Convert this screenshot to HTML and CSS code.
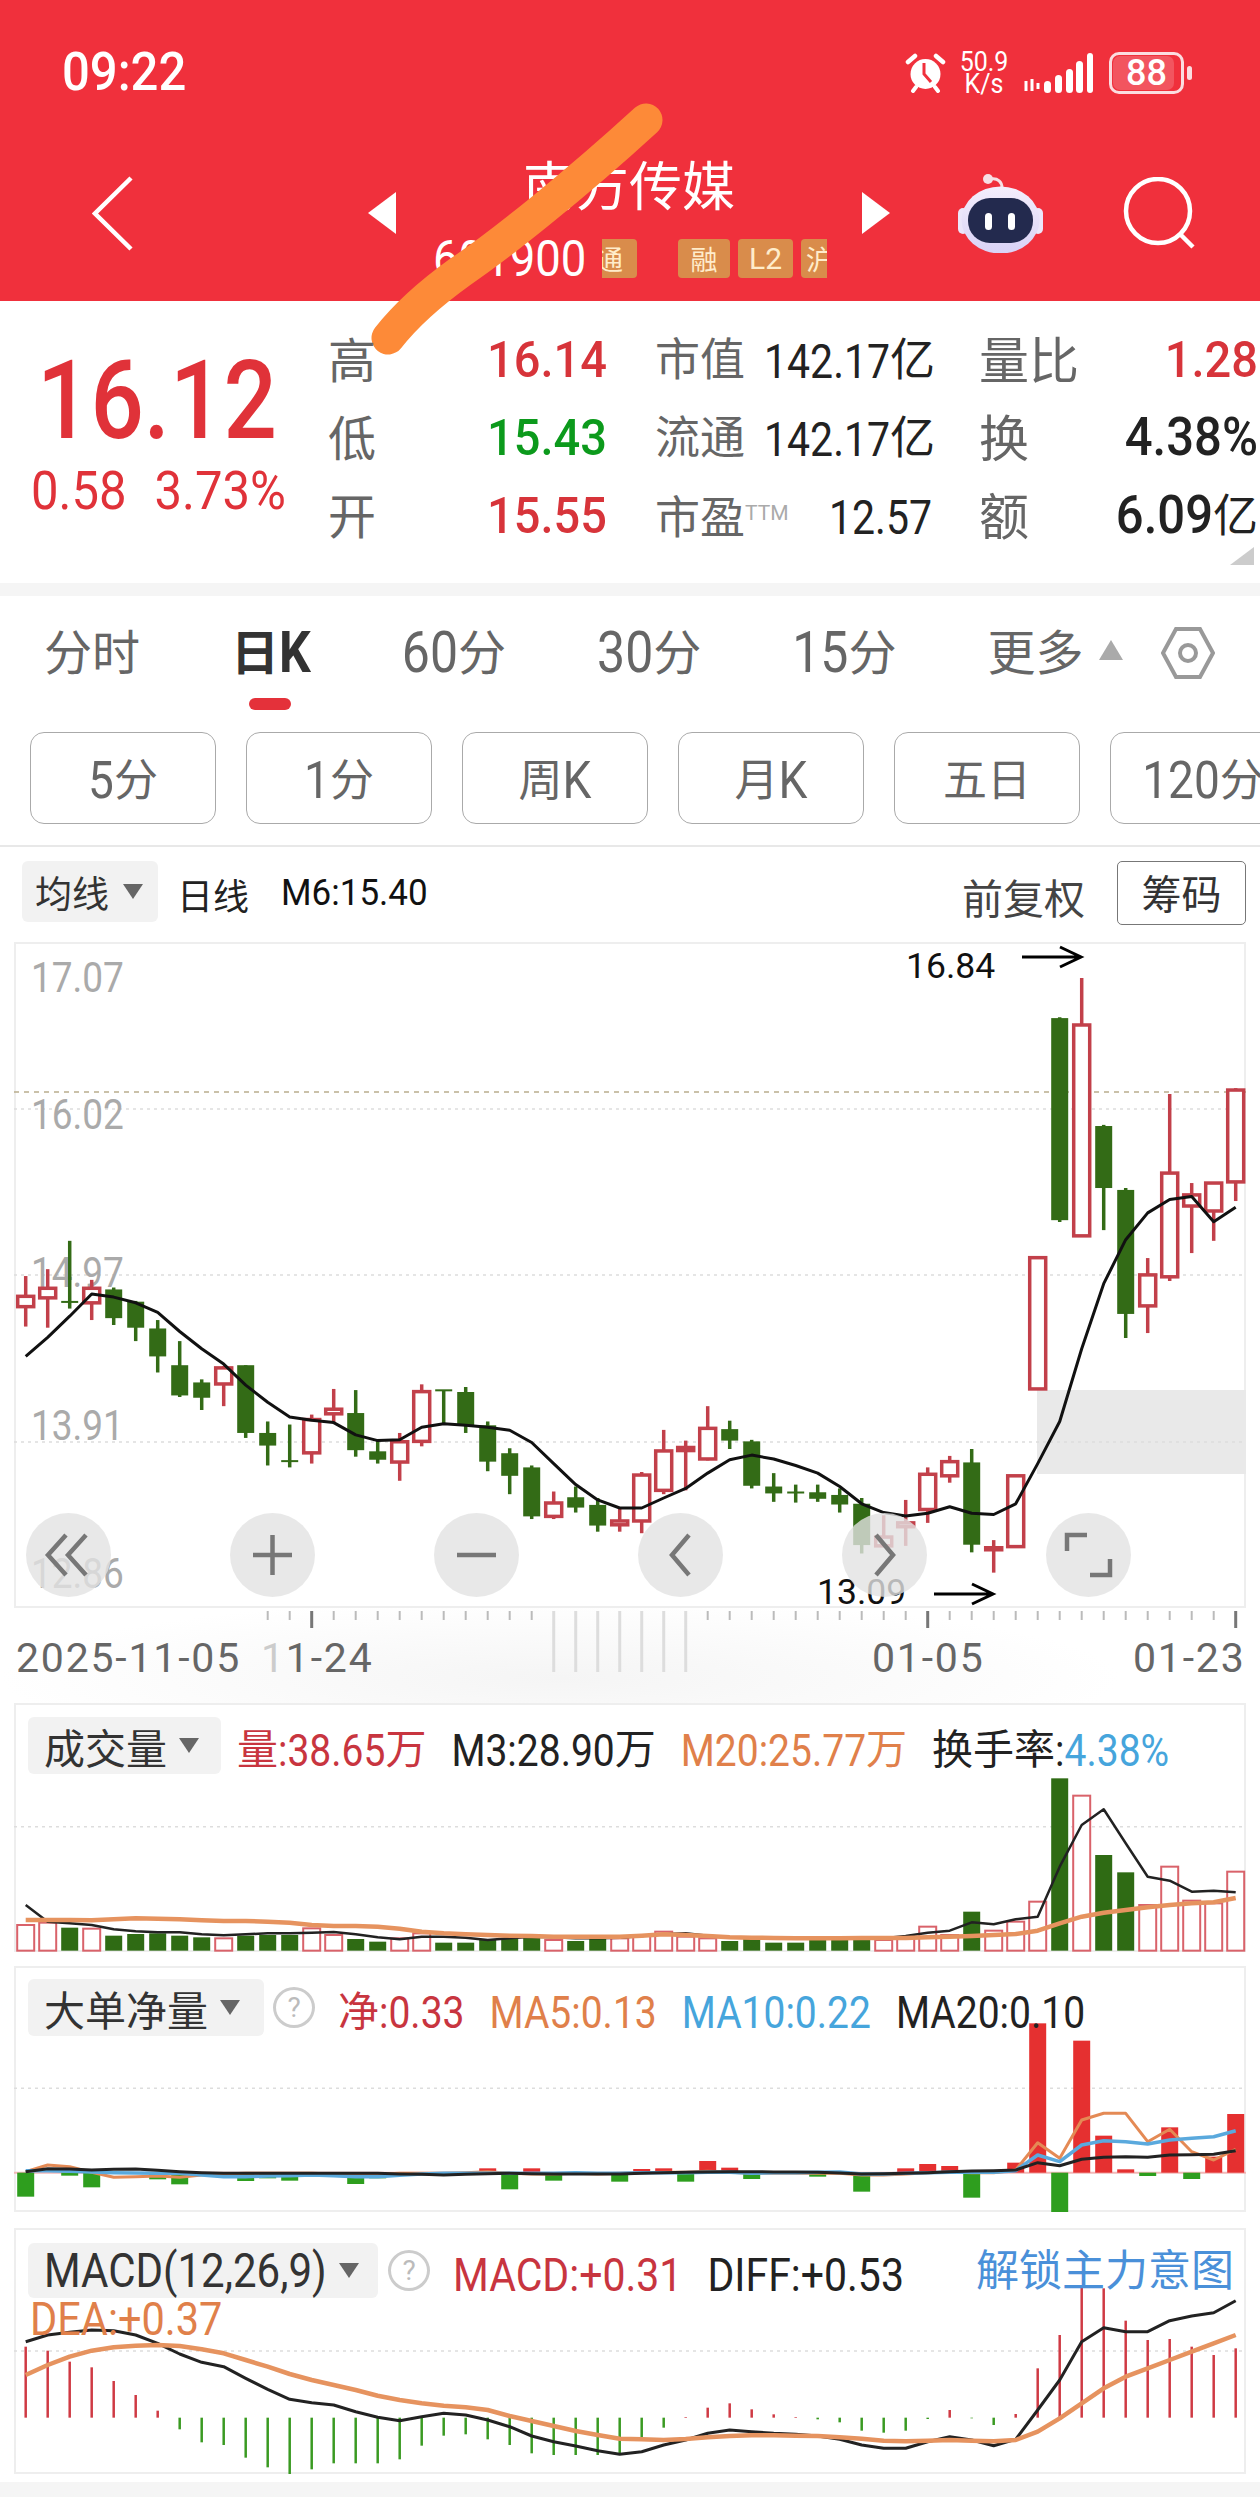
FILE: index.html
```html
<!DOCTYPE html>
<html lang="zh-CN">
<head>
  <meta charset="UTF-8">
  <meta name="viewport" content="width=device-width, initial-scale=1.0">
  <title>南方传媒</title>
  <link rel="stylesheet" href="styles.css">
</head>
<body>
<div class="page">

  <!-- red top bar -->
  <header class="topbar">
    <div class="status">
      <span class="n time">09:22</span>
      <div class="status-right">
        <svg class="alarm" viewBox="0 0 41 40">
          <circle cx="20.5" cy="21" r="15" fill="#fff"/>
          <path d="M3 9 L10 3 M38 9 L31 3" stroke="#fff" stroke-width="4.5" stroke-linecap="round"/>
          <path d="M8 38 L11 34 M33 38 L30 34" stroke="#fff" stroke-width="4" stroke-linecap="round"/>
          <path d="M19 10 V21 L26 29" stroke="#F0303C" stroke-width="3" fill="none"/>
        </svg>
        <div class="speed"><span class="n">50.9</span><span class="n">K/s</span></div>
        <svg class="signal" viewBox="0 0 70 40">
          <path d="M3 28 V38 M9 26 V38 M15 30 V36" stroke="#fff" stroke-width="3" fill="none"/>
          <rect x="21" y="28" width="7" height="12" rx="3.5" fill="#fff"/>
          <rect x="32" y="22" width="7" height="18" rx="3.5" fill="#fff"/>
          <rect x="43" y="16" width="7" height="24" rx="3.5" fill="#fff"/>
          <rect x="53" y="8" width="7" height="32" rx="3.5" fill="#fff"/>
          <rect x="64" y="0" width="6" height="40" rx="3" fill="#fff"/>
        </svg>
        <div class="battery"><span class="battery-fill"></span><span class="battery-num">88</span></div>
      </div>
    </div>
    <div class="titlebar">
      <svg class="back" viewBox="0 0 41 75"><path d="M39 2 L3 37.5 L39 73"/></svg>
      <span class="tri-left"></span>
      <div class="stock">
        <div class="stock-name">南方传媒</div>
        <div class="stock-code">
          <span class="n code">601900</span>
          <span class="tag tag-clip-l"><span>通</span></span>
          <span class="tag tag-rong">融</span>
          <span class="tag tag-l2">L2</span>
          <span class="tag tag-clip-r"><span>沪</span></span>
        </div>
      </div>
      <span class="tri-right"></span>
      <svg class="robot" viewBox="0 0 85 80">
        <defs>
          <linearGradient id="shell" x1="0" y1="0" x2="0" y2="1">
            <stop offset="0" stop-color="#f4eefc"/>
            <stop offset="1" stop-color="#d9d2f6"/>
          </linearGradient>
        </defs>
        <circle cx="30" cy="6" r="5" fill="#f6dfe4"/>
        <path d="M33 6 C40 5 44 9 44 15" stroke="#f6dfe4" stroke-width="3" fill="none"/>
        <rect x="0" y="35" width="10" height="26" rx="5" fill="#ece6fa"/>
        <rect x="75" y="35" width="10" height="26" rx="5" fill="#ece6fa"/>
        <ellipse cx="42.5" cy="47" rx="39" ry="33.5" fill="url(#shell)"/>
        <rect x="10" y="25" width="65" height="45" rx="22" fill="#232a4e"/>
        <rect x="27" y="40" width="7" height="17" rx="3.5" fill="#fff"/>
        <rect x="50" y="40" width="7" height="17" rx="3.5" fill="#fff"/>
      </svg>
      <svg class="search" viewBox="0 0 72 72">
        <circle cx="35" cy="34" r="32"/>
        <path d="M56 56 L70 70"/>
      </svg>
    </div>
  </header>

  <!-- the marker stroke someone drew over the screenshot -->
  <svg class="scribble" viewBox="0 0 1260 400"><path d="M646 120 C575 185 500 245 460 272 C428 295 406 315 388 338"/></svg>

  <section class="quote">
    <div class="price-box">
      <div class="n price">16.12</div>
      <div class="change"><span class="n">0.58</span><span class="n">3.73%</span></div>
    </div>
    <div class="stats">
      <span class="lbl">高</span><span class="val red"><span class="n">16.14</span></span>
      <span class="lbl">市值</span><span class="val val-s dark"><span class="n">142.17</span>亿</span>
      <span class="lbl">量比</span><span class="val red"><span class="n">1.28</span></span>
      <span class="lbl">低</span><span class="val green"><span class="n">15.43</span></span>
      <span class="lbl">流通</span><span class="val val-s dark"><span class="n">142.17</span>亿</span>
      <span class="lbl">换</span><span class="val val-l dark"><span class="n">4.38%</span></span>
      <span class="lbl">开</span><span class="val red"><span class="n">15.55</span></span>
      <span class="lbl">市盈<span class="ttm">TTM</span></span><span class="val val-s dark"><span class="n">12.57</span></span>
      <span class="lbl">额</span><span class="val val-l dark"><span class="n">6.09</span>亿</span>
    </div>
    <span class="corner"></span>
  </section>
  <div class="strip"></div>

  <nav class="tabs">
    <span class="tab">分时</span>
    <span class="tab active">日<span class="n">K</span></span>
    <span class="tab"><span class="n">60</span>分</span>
    <span class="tab"><span class="n">30</span>分</span>
    <span class="tab"><span class="n">15</span>分</span>
    <span class="tab">更多</span>
    <span class="tab-arrow"></span>
    <svg class="hex" viewBox="0 0 54 54">
      <path d="M15 3 H39 L52 27 L39 51 H15 L2 27 Z"/>
      <circle cx="27" cy="27" r="8"/>
    </svg>
  </nav>

  <div class="chips">
    <span class="chip"><span class="n">5</span>分</span>
    <span class="chip"><span class="n">1</span>分</span>
    <span class="chip">周<span class="n">K</span></span>
    <span class="chip">月<span class="n">K</span></span>
    <span class="chip">五日</span>
    <span class="chip"><span class="n">120</span>分</span>
  </div>

  <div class="chart-head">
    <span class="select select-ma">均线<i class="caret"></i></span>
    <span class="head-day">日线</span>
    <span class="n head-m6">M6:15.40</span>
    <span class="head-adj">前复权</span>
    <span class="head-btn">筹码</span>
  </div>

  <div class="panel panel-main">
    <svg class="plot" id="mainPlot" viewBox="14 942 1232 666">
      <rect class="zone" x="1037" y="1390" width="209" height="84"/>
      <line class="grid" x1="14" x2="1246" y1="1109" y2="1109"/>
      <line class="grid" x1="14" x2="1246" y1="1275" y2="1275"/>
      <line class="grid" x1="14" x2="1246" y1="1442" y2="1442"/>
      <line class="last-price" x1="14" x2="1246" y1="1092" y2="1092"/>
      <text class="axis-num" x="31" y="990">17.07</text>
      <text class="axis-num" x="31" y="1127">16.02</text>
      <text class="axis-num" x="31" y="1285">14.97</text>
      <text class="axis-num" x="31" y="1438">13.91</text>
      <text class="axis-num" x="31" y="1586">12.86</text>
      <g id="candles"></g>
      <text class="mark-num" x="906" y="978">16.84</text>
      <path class="arrow" d="M1022 957 H1081 M1060 947 L1081 957 L1060 967"/>
      <text class="mark-num" x="817" y="1604">13.09</text>
      <path class="arrow" d="M934 1594 H993 M972 1584 L993 1594 L972 1604"/>
    </svg>
    <div class="nav-btns">
      <span class="nav-btn"><svg viewBox="0 0 85 84"><path d="M40 22 L22 42 L40 62 M60 22 L42 42 L60 62"/></svg></span>
      <span class="nav-btn"><svg viewBox="0 0 85 84"><path d="M42.5 22 V62 M23 42 H62"/></svg></span>
      <span class="nav-btn"><svg viewBox="0 0 85 84"><path d="M23 42 H62"/></svg></span>
      <span class="nav-btn"><svg viewBox="0 0 85 84"><path d="M51 22 L34 42 L51 62"/></svg></span>
      <span class="nav-btn"><svg viewBox="0 0 85 84"><path d="M34 22 L51 42 L34 62"/></svg></span>
      <span class="nav-btn"><svg viewBox="0 0 85 84"><path d="M21 38 V22 H41 M44 62 H64 V46"/></svg></span>
    </div>
  </div>

  <div class="xaxis">
    <svg class="plot" id="axisPlot" viewBox="0 1608 1260 95">
      <g id="ticks"></g>
      <text class="date" x="16" y="1672">2025-11-05</text>
      <text class="date" x="261" y="1672"><tspan class="date-fade">1</tspan>1-24</text>
      <text class="date" x="872" y="1672">01-05</text>
      <text class="date" x="1133" y="1672">01-23</text>
    </svg>
  </div>

  <div class="panel panel-vol">
    <svg class="plot" id="volPlot" viewBox="14 1703 1232 249"></svg>
    <div class="ind-head">
      <span class="select select-vol">成交量<i class="caret"></i></span>
      <span class="ind red-t">量<span class="n">:38.65</span>万</span>
      <span class="ind dark-t"><span class="n">M3:28.90</span>万</span>
      <span class="ind orange-t"><span class="n">M20:25.77</span>万</span>
      <span class="ind dark-t">换手率<span class="n">:</span><span class="n blue-t">4.38%</span></span>
    </div>
  </div>

  <div class="panel panel-big">
    <svg class="plot" id="bigPlot" viewBox="14 1966 1232 246"></svg>
    <div class="ind-head">
      <span class="select select-big">大单净量<i class="caret"></i></span>
      <span class="help">?</span>
      <span class="ind red-t">净<span class="n">:0.33</span></span>
      <span class="ind orange-t"><span class="n">MA5:0.13</span></span>
      <span class="ind blue-t"><span class="n">MA10:0.22</span></span>
      <span class="ind dark-t"><span class="n">MA20:0.10</span></span>
    </div>
  </div>

  <div class="panel panel-macd">
    <svg class="plot" id="macdPlot" viewBox="14 2228 1232 246"></svg>
    <div class="ind-head">
      <span class="select select-macd"><span class="n">MACD(12,26,9)</span><i class="caret"></i></span>
      <span class="help">?</span>
      <span class="ind red-t"><span class="n">MACD:+0.31</span></span>
      <span class="ind dark-t"><span class="n">DIFF:+0.53</span></span>
      <span class="unlock">解锁主力意图</span>
    </div>
    <div class="dea orange-t"><span class="n">DEA:+0.37</span></div>
  </div>

  <div class="strip strip-end"></div>
</div>
<script src="chart.js"></script>
</body>
</html>
```

FILE: styles.css
```css
* {
  box-sizing: border-box;
}

html, body {
  margin: 0;
  padding: 0;
  background: #fff;
}

body {
  font-family: "Noto Sans CJK SC", sans-serif;
  color: #222;
}

.page {
  position: relative;
  width: 1260px;
  height: 2513px;
  overflow: hidden;
}

/* the app's digits are a tall narrow face: Roboto pulled up */
.n {
  display: inline-block;
  font-family: Roboto, sans-serif;
  transform: scaleY(1.13);
}

/* top bar */
.topbar {
  height: 301px;
  background: #f0303c;
  color: #fff;
}

.status {
  height: 146px;
  display: flex;
  align-items: center;
  justify-content: space-between;
  padding: 0 68px 0 62px;
}

.time {
  font-size: 49px;
  font-weight: 500;
  line-height: 60px;
  transform: scaleY(1.08);
}

.status-right {
  display: flex;
  align-items: center;
}

.alarm {
  width: 41px;
  height: 40px;
  margin-right: 14px;
}

.speed {
  display: flex;
  flex-direction: column;
  align-items: center;
  width: 48px;
  font-size: 25px;
  line-height: 22px;
  margin-right: 15px;
}

.signal {
  width: 70px;
  height: 40px;
  margin-right: 16px;
}

.battery {
  position: relative;
  width: 75px;
  height: 42px;
  border: 3px solid #fbdde0;
  border-radius: 10px;
  display: flex;
  align-items: center;
  justify-content: center;
  margin-right: 8px;
}

.battery::after {
  content: "";
  position: absolute;
  right: -11px;
  top: 11px;
  width: 5px;
  height: 14px;
  border-radius: 3px;
  background: #fbdde0;
}

.battery-fill {
  position: absolute;
  left: 1px;
  top: 1px;
  bottom: 1px;
  width: 61px;
  border-radius: 7px;
  background: rgba(255, 255, 255, 0.18);
}

.battery-num {
  position: relative;
  font-family: Roboto, sans-serif;
  font-weight: 500;
  font-size: 36px;
  line-height: 36px;
}

.titlebar {
  height: 134px;
  display: flex;
  align-items: center;
  padding-left: 92px;
}

.back {
  width: 41px;
  height: 75px;
  margin-right: 235px;
}

.back path,
.search circle,
.search path {
  fill: none;
  stroke: #fff;
  stroke-width: 4.5px;
}

.tri-left,
.tri-right {
  width: 0;
  height: 0;
  border-top: 21px solid transparent;
  border-bottom: 21px solid transparent;
}

.tri-left {
  border-right: 28px solid #fff;
}

.tri-right {
  border-left: 28px solid #fff;
}

.stock {
  width: 466px;
  align-self: flex-start;
  margin-top: 9px;
}

.stock-name {
  font-size: 53px;
  line-height: 56px;
  text-align: center;
}

.stock-code {
  display: flex;
  align-items: center;
  height: 39px;
  margin-top: 28px;
  padding-left: 37px;
}

.code {
  width: 152px;
  font-size: 45.5px;
  line-height: 39px;
  transform: scaleY(1.1);
}

.tag {
  height: 39px;
  border-radius: 4px;
  background: #d98c4b;
  color: #ffeccb;
  font-size: 27px;
  line-height: 39px;
  text-align: center;
  overflow: hidden;
}

.tag-clip-l {
  width: 35px;
  margin: 0 41px 0 17px;
  border-radius: 0 4px 4px 0;
  text-align: left;
}

.tag-clip-l span {
  display: block;
  margin-left: -6px;
}

.tag-rong {
  width: 52px;
  margin-right: 8px;
}

.tag-l2 {
  width: 55px;
  margin-right: 8px;
  font-family: Roboto, sans-serif;
  font-size: 30px;
}

.tag-clip-r {
  width: 26px;
  border-radius: 4px 0 0 4px;
  text-align: left;
}

.tag-clip-r span {
  display: block;
  width: 30px;
  margin-left: 5px;
}

.robot {
  width: 85px;
  height: 80px;
  margin-left: 68px;
}

.search {
  width: 72px;
  height: 72px;
  margin-left: 80px;
}

.scribble {
  position: absolute;
  left: 0;
  top: 0;
  width: 1260px;
  height: 400px;
}

.scribble path {
  fill: none;
  stroke: #fd8a38;
  stroke-width: 33px;
  stroke-linecap: round;
}

/* quote block */
.quote {
  position: relative;
  height: 282px;
  display: flex;
}

.price-box {
  width: 328px;
  padding: 50px 0 0 31px;
  color: #e03239;
}

.price {
  display: block;
  font-size: 94px;
  font-weight: 500;
  line-height: 100px;
  padding-left: 6px;
  transform: scaleY(1.16);
}

.change {
  display: flex;
  gap: 28px;
  margin-top: 16px;
  font-size: 49px;
  line-height: 50px;
}

.change .n {
  transform: scaleY(1.09);
}

.stats {
  width: 932px;
  display: grid;
  grid-template-columns: 100px 179px 157px 168px 157px 169px;
  grid-auto-rows: 78px;
  padding-top: 17px;
}

.lbl {
  font-size: 48px;
  line-height: 78px;
  color: #666;
  white-space: nowrap;
}

.lbl:nth-child(6n+3) {
  margin-left: 48px;
  font-size: 45px;
}

.lbl:nth-child(6n+5) {
  margin-left: 47px;
  font-size: 50px;
}

.val {
  font-size: 45px;
  line-height: 78px;
  text-align: right;
  white-space: nowrap;
}

.val .n {
  font-size: 47px;
  font-weight: 500;
  transform: scaleY(1.08);
}

.val-s .n {
  font-size: 41px;
  font-weight: 400;
  transform: scaleY(1.17);
}

.val-l .n {
  font-size: 49px;
}

.ttm {
  font-family: Roboto, sans-serif;
  font-size: 21px;
  color: #aaa;
  vertical-align: 14px;
}

.red { color: #d7343a; }
.green { color: #0c9a1c; }
.dark { color: #222; }

.corner {
  position: absolute;
  right: 6px;
  bottom: 18px;
  width: 0;
  height: 0;
  border-left: 24px solid transparent;
  border-bottom: 18px solid #ccc;
}

.strip {
  height: 13px;
  background: #f5f5f5;
}

/* period tabs */
.tabs {
  position: relative;
  height: 136px;
  display: flex;
  align-items: flex-start;
  gap: 91px;
  padding: 28px 0 0 44px;
}

.tab {
  position: relative;
  font-size: 48px;
  line-height: 50px;
  color: #666;
}

.tab .n {
  font-size: 50px;
}

.tab.active {
  font-weight: 700;
  color: #333;
}

.tab.active::after {
  content: "";
  position: absolute;
  left: 18px;
  top: 74px;
  width: 42px;
  height: 12px;
  border-radius: 6px;
  background: #e4313a;
}

.tab-arrow {
  width: 0;
  height: 0;
  margin: 16px 0 0 -76px;
  border-left: 12px solid transparent;
  border-right: 12px solid transparent;
  border-bottom: 20px solid #aaa;
}

.hex {
  width: 54px;
  height: 54px;
  margin: 2px 0 0 -53px;
}

.hex path,
.hex circle {
  fill: none;
  stroke: #999;
  stroke-width: 4px;
}

.chips {
  height: 115px;
  display: flex;
  gap: 30px;
  padding-left: 30px;
  overflow: hidden;
  border-bottom: 2px solid #e8e8e8;
}

.chip {
  flex: none;
  width: 186px;
  height: 92px;
  border: 1px solid #aaa;
  border-radius: 14px;
  font-size: 44px;
  line-height: 88px;
  text-align: center;
  color: #666;
  white-space: nowrap;
}

.chip .n {
  font-size: 46px;
}

/* chart header */
.chart-head {
  height: 95px;
  display: flex;
  align-items: flex-start;
  padding: 14px 14px 0 22px;
}

.select {
  display: flex;
  align-items: center;
  flex: none;
  background: #f2f2f2;
  border-radius: 6px;
  color: #333;
}

.caret {
  width: 0;
  height: 0;
  border-left: 10px solid transparent;
  border-right: 10px solid transparent;
  border-top: 15px solid #666;
}

.select-ma {
  width: 136px;
  height: 61px;
  padding-left: 13px;
  gap: 14px;
  font-size: 37px;
}

.head-day {
  margin-left: 19px;
  font-size: 36px;
  line-height: 66px;
  color: #222;
}

.head-m6 {
  margin-left: 32px;
  font-size: 35px;
  line-height: 66px;
  color: #111;
  transform: scaleY(1.04);
}

.head-adj {
  margin-left: auto;
  font-size: 41px;
  line-height: 70px;
  color: #444;
}

.head-btn {
  width: 129px;
  height: 64px;
  margin-left: 32px;
  border: 1px solid #777;
  border-radius: 5px;
  font-size: 40px;
  line-height: 60px;
  text-align: center;
  color: #333;
}

/* chart panels */
.panel {
  position: relative;
  margin: 0 14px;
  width: 1232px;
  box-shadow: inset 0 0 0 2px #eee;
}

.panel-main { height: 666px; }
.panel-vol { height: 249px; }
.panel-big { height: 246px; margin-top: 14px; }
.panel-macd { height: 246px; margin-top: 16px; }

.plot {
  position: absolute;
  left: 0;
  top: 0;
  width: 100%;
  height: 100%;
}

.zone { fill: #e9e9e9; }

.grid {
  stroke: #ddd;
  stroke-width: 1.5px;
  stroke-dasharray: 3 4;
}

.last-price {
  stroke: #b9ad8d;
  stroke-width: 1.5px;
  stroke-dasharray: 5 5;
}

.axis-num {
  font-family: Roboto, sans-serif;
  font-size: 37px;
  fill: #aaa;
  transform-box: fill-box;
  transform-origin: center;
  transform: scaleY(1.14);
}

.mark-num {
  font-family: Roboto, sans-serif;
  font-size: 35.5px;
  fill: #111;
}

.arrow {
  fill: none;
  stroke: #000;
  stroke-width: 3px;
}

.wick-up { stroke: #c2404a; stroke-width: 3.5px; }
.wick-down { stroke: #336b16; stroke-width: 3.5px; }
.body-up { fill: #fff; stroke: #c2404a; stroke-width: 3.5px; }
.body-down { fill: #336b16; }

.ma-line {
  fill: none;
  stroke: #111;
  stroke-width: 3px;
  stroke-linejoin: round;
}

.nav-btns {
  position: absolute;
  left: 12px;
  top: 571px;
  display: flex;
  gap: 119px;
}

.nav-btn {
  width: 85px;
  height: 84px;
  border-radius: 50%;
  background: rgba(226, 226, 226, 0.8);
}

.nav-btn svg {
  display: block;
  width: 85px;
  height: 84px;
}

.nav-btn path {
  fill: none;
  stroke: #777;
  stroke-width: 4.5px;
}

.xaxis {
  position: relative;
  height: 95px;
  background: radial-gradient(ellipse 560px 80px at 560px 70px, #f5f5f5, #fff);
}

.date {
  font-family: Roboto, sans-serif;
  font-size: 41px;
  letter-spacing: 1.8px;
  fill: #666;
}

.date-fade { fill: #ccc; }

.tick { stroke: #bbb; stroke-width: 2px; }
.tick-long { stroke: #777; stroke-width: 3px; }
.tick-fog { stroke: #ddd; stroke-width: 3px; }

/* indicator headers */
.ind-head {
  position: relative;
  top: 14px;
  display: flex;
  align-items: center;
  height: 57px;
  padding-left: 14px;
}

.panel-big .ind-head { top: 13px; }

.select-vol,
.select-big,
.select-macd {
  padding-left: 16px;
  gap: 12px;
  font-size: 41px;
}

.select-vol {
  width: 193px;
  height: 57px;
  margin-right: 16px;
}

.select-big {
  width: 236px;
  height: 57px;
  margin-right: 9px;
}

.select-macd {
  width: 350px;
  height: 55px;
  margin-right: 10px;
}

.select-macd .n {
  font-size: 42px;
}

.ind {
  font-size: 41px;
  white-space: nowrap;
  margin-right: 25px;
}

.ind .n {
  font-size: 39px;
}

.panel-macd .ind .n {
  font-size: 41px;
}

.help {
  flex: none;
  width: 42px;
  height: 41px;
  border: 3px solid #ccc;
  border-radius: 50%;
  margin-right: 23px;
  font-family: Roboto, sans-serif;
  font-size: 28px;
  line-height: 35px;
  text-align: center;
  color: #bbb;
}

.unlock {
  position: absolute;
  left: 962px;
  top: -3px;
  font-size: 43px;
  line-height: 57px;
  color: #4a90d9;
}

.dea {
  position: absolute;
  left: 16px;
  top: 63px;
  font-size: 41.5px;
  line-height: 48px;
}

.red-t { color: #c8353f; }
.dark-t { color: #222; }
.orange-t { color: #e0804a; }
.blue-t { color: #46a5dc; }

.strip-end {
  height: 15px;
  margin-top: 8px;
}

/* bars and lines of the lower charts */
.vol-up { fill: #fff; stroke: #d9626a; stroke-width: 2px; }
.vol-down { fill: #2f6b14; }
.big-up { fill: #e53030; }
.big-down { fill: #2e9e1e; }
.macd-up { stroke: #cf3a44; stroke-width: 2.5px; }
.macd-down { stroke: #3a9a22; stroke-width: 2.5px; }
.zero { stroke: #f2b8b8; stroke-width: 2px; }

.line-black { fill: none; stroke: #222; stroke-width: 3px; stroke-linejoin: round; }
.line-thin { fill: none; stroke: #222; stroke-width: 2.5px; stroke-linejoin: round; }
.line-orange { fill: none; stroke: #e48a55; stroke-width: 3px; stroke-linejoin: round; }
.line-orange-wide { fill: none; stroke: #e6935f; stroke-width: 4.5px; stroke-linejoin: round; }
.line-blue { fill: none; stroke: #5aa9dd; stroke-width: 3.5px; stroke-linejoin: round; }
```

FILE: chart.js
```js
// all charts share one x scale, 56 days, page coordinates
const SVG_NS = 'http://www.w3.org/2000/svg';
const xAt = i => 25.7 + 22 * i;

function add(parent, tag, attrs) {
  const el = document.createElementNS(SVG_NS, tag);
  for (const k in attrs) el.setAttribute(k, attrs[k]);
  parent.appendChild(el);
  return el;
}

function drawLine(svg, points, yOf, cls) {
  const d = points.map((v, i) => (i ? 'L' : 'M') + xAt(i).toFixed(1) + ' ' + yOf(v).toFixed(1)).join(' ');
  add(svg, 'path', { d: d, class: cls });
}

// [up, high, top, bottom, low], read off the chart, 2.613 units per px from y=1100
const mainY = v => 1100 + v / 2.613;
const candles = [
  [1,460,513,540,592],[1,442,492,517,595],[0,368,525,529,545],[1,470,492,530,575],
  [0,490,495,570,588],[0,525,527,595,630],[0,575,597,670,712],[0,630,693,772,776],
  [0,730,738,778,810],[1,695,700,742,800],[0,693,693,870,883],[0,840,870,903,955],
  [0,848,941,945,960],[1,822,835,922,950],[1,755,808,820,845],[0,758,818,915,932],
  [0,890,918,940,950],[1,870,893,946,995],[1,743,762,892,905],[0,758,756,760,848],
  [0,750,763,850,870],[0,840,850,945,970],[0,910,923,982,1030],[0,955,960,1088,1095],
  [1,1023,1053,1088,1095],[0,1010,1038,1065,1078],[0,1040,1058,1112,1128],[1,1065,1100,1110,1128],
  [1,972,980,1100,1132],[1,862,917,1020,1030],[1,890,908,916,1020],[1,800,858,938,942],
  [0,838,860,890,912],[0,888,892,1008,1015],[0,975,1010,1028,1050],[0,1005,1023,1027,1052],
  [0,1005,1025,1042,1050],[0,1015,1032,1057,1078],[0,1040,1055,1163,1185],[1,1085,1142,1165,1165],
  [1,1045,1105,1115,1165],[1,960,978,1070,1105],[1,930,945,982,1000],[0,912,947,1162,1182],
  [1,1150,1170,1174,1235],[1,980,982,1167,1168],[1,410,412,755,757],[0,-216,-214,314,319],
  [1,-319,-196,355,356],[0,65,68,230,340],[0,230,235,559,622],[1,413,457,538,609],
  [1,-16,191,462,473],[1,217,248,277,400],[1,217,217,290,368],[1,-31,-26,214,264]
];
const m6 = [670,620,565,507,515,530,555,605,650,690,745,790,828,837,843,875,890,888,855,846,850,855,863,895,950,1005,1045,1066,1066,1040,1015,975,940,928,938,955,975,1010,1055,1078,1087,1080,1063,1080,1083,1055,950,840,650,480,365,295,260,252,318,280];

const candleG = document.getElementById('candles');
candles.forEach((c, i) => {
  const x = xAt(i);
  const up = c[0] === 1;
  add(candleG, 'line', { x1: x, x2: x, y1: mainY(c[1]), y2: mainY(c[4]), class: up ? 'wick-up' : 'wick-down' });
  const top = mainY(c[2]);
  const h = Math.max(mainY(c[3]) - top, 2);
  if (up) add(candleG, 'rect', { x: x - 8, y: top, width: 16, height: h, class: 'body-up' });
  else add(candleG, 'rect', { x: x - 8.5, y: top, width: 17, height: h, class: 'body-down' });
});
drawLine(candleG, m6, mainY, 'ma-line');

// ticks under the main chart
const ticks = document.getElementById('ticks');
for (let i = 11; i < 56; i++) {
  const x = xAt(i);
  const long = i === 13 || i === 41 || i === 55;
  const fog = i >= 24 && i <= 30;
  add(ticks, 'line', { x1: x, x2: x, y1: 1611, y2: fog ? 1672 : long ? 1628 : 1620, class: long ? 'tick-long' : fog ? 'tick-fog' : 'tick' });
}

// the three lower charts: 3 units per px
const volY = v => 1690 + v / 3;
const macdY = v => 2200 + v / 3;

const volPlot = document.getElementById('volPlot');
add(volPlot, 'line', { x1: 14, x2: 1246, y1: volY(410), y2: volY(410), class: 'grid' });
const vol = [[1,705],[1,698],[0,713],[1,716],[0,737],[0,732],[0,730],[0,737],[0,742],[1,745],[0,737],[0,735],[0,735],[1,715],[1,735],[0,747],[0,755],[1,745],[1,730],[0,758],[0,758],[0,748],[0,745],[0,732],[1,750],[0,753],[0,745],[1,745],[1,738],[1,725],[1,740],[1,745],[0,753],[0,747],[0,758],[0,758],[0,750],[0,750],[0,745],[1,750],[1,745],[1,710],[1,735],[0,665],[1,722],[1,695],[1,635],[0,265],[1,317],[0,495],[0,547],[1,645],[1,530],[1,632],[1,640],[1,545]];
const volBase = volY(782);
vol.forEach((b, i) => {
  const top = volY(b[1]);
  add(volPlot, 'rect', { x: xAt(i) - 8.5, y: top, width: 17, height: volBase - top, class: b[0] ? 'vol-up' : 'vol-down' });
});
const m3 = [645,695,700,705,718,724,727,727,733,736,733,730,730,728,726,733,742,748,740,740,743,750,745,740,742,745,745,743,738,733,730,737,742,742,745,745,745,745,745,745,738,728,722,697,703,688,680,530,405,358,460,560,572,605,602,607];
const m20 = [690,690,690,691,688,685,686,688,691,693,693,695,698,705,708,708,710,716,725,730,733,735,737,738,740,740,740,740,737,733,735,738,742,743,744,745,745,745,744,744,744,742,740,738,735,732,722,700,680,668,660,652,645,640,637,624];
drawLine(volPlot, m3, volY, 'line-thin');
drawLine(volPlot, m20, volY, 'line-orange-wide');

const bigPlot = document.getElementById('bigPlot');
add(bigPlot, 'line', { x1: 14, x2: 1246, y1: volY(1195), y2: volY(1195), class: 'grid' });
add(bigPlot, 'line', { x1: 14, x2: 1246, y1: volY(1448), y2: volY(1448), class: 'zero' });
const net = { 0:1520, 2:1457, 3:1492, 6:1468, 7:1483, 10:1473, 11:1465, 12:1472, 15:1482, 16:1465, 21:1435, 22:1498, 23:1435, 24:1472, 27:1475, 28:1437, 29:1435, 30:1475, 31:1413, 32:1433, 33:1467, 36:1460, 38:1505, 40:1435, 41:1422, 42:1428, 43:1523, 45:1418, 46:1000, 47:1568, 48:1052, 49:1337, 50:1438, 51:1458, 52:1312, 53:1467, 54:1400, 55:1272 };
const zeroY = volY(1448);
for (const k in net) {
  const y = volY(net[k]);
  const x = xAt(Number(k)) - 8.5;
  if (net[k] < 1448) add(bigPlot, 'rect', { x: x, y: y, width: 17, height: zeroY - y, class: 'big-up' });
  else add(bigPlot, 'rect', { x: x, y: zeroY, width: 17, height: y - zeroY, class: 'big-down' });
}
const ma5 = [1445,1425,1430,1447,1462,1460,1458,1462,1455,1452,1450,1450,1450,1450,1452,1455,1453,1450,1450,1450,1448,1445,1450,1452,1452,1450,1452,1450,1448,1447,1447,1444,1447,1450,1450,1450,1450,1450,1455,1455,1452,1448,1446,1448,1448,1440,1358,1405,1290,1270,1270,1355,1318,1385,1410,1378];
const ma10 = [1442,1442,1444,1446,1448,1449,1450,1450,1455,1460,1460,1458,1457,1455,1457,1460,1460,1456,1452,1450,1450,1450,1450,1450,1450,1448,1450,1450,1448,1448,1448,1447,1447,1450,1448,1448,1447,1446,1452,1452,1450,1448,1447,1447,1447,1442,1395,1415,1365,1352,1355,1362,1350,1345,1340,1322];
const ma20 = [1445,1436,1437,1440,1438,1437,1441,1445,1448,1450,1450,1450,1450,1450,1450,1450,1450,1452,1453,1455,1453,1451,1450,1451,1452,1452,1452,1452,1450,1448,1447,1446,1445,1445,1446,1446,1447,1449,1452,1451,1450,1448,1445,1443,1442,1440,1418,1427,1408,1402,1400,1402,1395,1394,1393,1382];
drawLine(bigPlot, ma5, volY, 'line-orange');
drawLine(bigPlot, ma10, volY, 'line-blue');
drawLine(bigPlot, ma20, volY, 'line-black');

const macdPlot = document.getElementById('macdPlot');
add(macdPlot, 'line', { x1: 14, x2: 1246, y1: macdY(453), y2: macdY(453), class: 'grid' });
const hist = [440,452,485,502,543,585,632,688,727,735,773,802,822,808,790,790,790,778,737,707,703,718,735,760,765,765,765,765,712,683,651,623,610,628,643,651,658,667,692,698,692,657,630,655,675,642,505,405,262,265,362,420,417,440,465,445];
const histZero = 653;
hist.forEach((v, i) => {
  const x = xAt(i);
  add(macdPlot, 'line', { x1: x, x2: x, y1: macdY(histZero), y2: macdY(v), class: v < histZero ? 'macd-up' : 'macd-down' });
});
const diff = [425,405,397,390,392,405,430,462,487,500,535,568,598,608,615,635,652,662,650,640,645,660,680,708,725,738,752,763,755,735,720,700,690,695,700,703,708,718,735,745,745,725,710,720,737,718,630,540,425,383,395,395,362,348,338,302];
const dea = [525,495,470,452,442,437,435,438,448,460,480,500,522,540,555,570,587,600,610,617,622,630,648,663,678,693,705,716,718,720,717,712,708,706,706,707,708,712,716,722,724,722,720,722,724,720,695,655,610,565,530,505,480,455,430,405];
drawLine(macdPlot, diff, macdY, 'line-black');
drawLine(macdPlot, dea, macdY, 'line-orange-wide');
```
